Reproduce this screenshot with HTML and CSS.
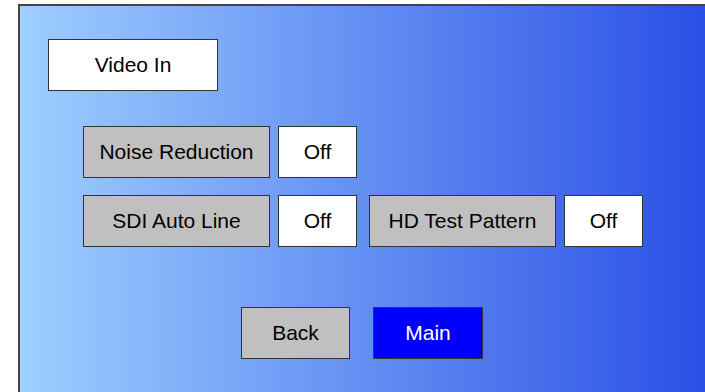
FILE: index.html
```html
<!DOCTYPE html>
<html lang="en">

<head>
  <meta charset="UTF-8">
  <meta name="viewport" content="width=device-width, initial-scale=1.0">
  <title>Video In</title>
  <link rel="stylesheet" href="styles.css">
</head>

<body>
  <div class="panel">
    <div class="box title">Video In</div>

    <div class="row first">
      <div class="box label">Noise Reduction</div>
      <div class="box value">Off</div>
    </div>

    <div class="row second">
      <div class="box label">SDI Auto Line</div>
      <div class="box value">Off</div>
      <div class="box label wide-gap">HD Test Pattern</div>
      <div class="box value">Off</div>
    </div>

    <div class="row nav">
      <div class="box btn back">Back</div>
      <div class="box btn main">Main</div>
    </div>
  </div>
</body>

</html>
```

FILE: styles.css
```css
* {
  margin: 0px;
  padding: 0px;
  box-sizing: border-box;
}

html,
body {
  width: 705px;
  height: 392px;
  overflow: hidden;
  background: #fff;
}

body {
  font-family: "Liberation Sans", Arial, sans-serif;
  font-size: 21px;
  color: #000;
}

.panel {
  margin: 4px 0 0 18px;
  height: 388px;
  border-top: 2px solid #444;
  border-left: 2px solid #444;
  background: linear-gradient(to right, #9dcfff, #2a4fe6);
}

.box {
  display: flex;
  align-items: center;
  justify-content: center;
  height: 52px;
  border: 1px solid #333;
  white-space: nowrap;
}

.title {
  width: 170px;
  margin: 33px 0 0 28px;
  background: #fff;
}

.row {
  display: flex;
  gap: 8px;
  margin-left: 63px;
}

.row.first {
  margin-top: 35px;
}

.row.second {
  margin-top: 17px;
}

.label {
  width: 187px;
  background: #c0c0c0;
}

.value {
  width: 79px;
  background: #fff;
}

.wide-gap {
  margin-left: 4px;
}

.row.nav {
  margin-top: 60px;
  margin-left: 221px;
  gap: 23px;
}

.back {
  width: 109px;
  background: #c0c0c0;
}

.main {
  width: 110px;
  background: #0000ff;
  color: #fff;
}
```
